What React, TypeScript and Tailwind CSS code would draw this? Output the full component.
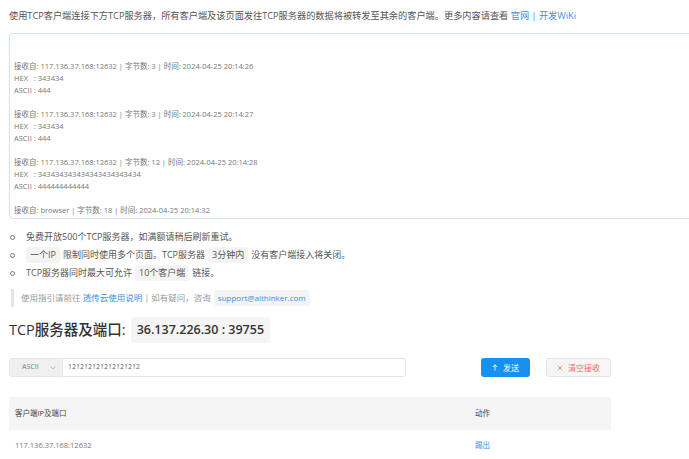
import React from 'react';

const logs = [
  '',
  '',
  '接收自: 117.136.37.168:12632 | 字节数: 3 | 时间: 2024-04-25 20:14:26',
  'HEX   : 343434',
  'ASCII : 444',
  '',
  '接收自: 117.136.37.168:12632 | 字节数: 3 | 时间: 2024-04-25 20:14:27',
  'HEX   : 343434',
  'ASCII : 444',
  '',
  '接收自: 117.136.37.168:12632 | 字节数: 12 | 时间: 2024-04-25 20:14:28',
  'HEX   : 343434343434343434343434',
  'ASCII : 444444444444',
  '',
  '接收自: browser | 字节数: 18 | 时间: 2024-04-25 20:14:32',
];

const Code: React.FC<{ children: React.ReactNode; className?: string }> = ({ children, className = '' }) => (
  <span className={`inline-block bg-[#f4f4f4] rounded-[3px] px-[4px] leading-[16px] mx-[3px] ${className}`}>{children}</span>
);

const App: React.FC = () => {
  return (
    <div
      className="w-[689px] h-[459px] overflow-hidden bg-white text-[#555] pl-[9px]"
      style={{ fontFamily: '"Open Sans", "Noto Sans CJK SC", sans-serif' }}
    >
      {/* intro */}
      <p className="pt-[9px] text-[9.2px] leading-[14px] whitespace-nowrap">
        使用TCP客户端连接下方TCP服务器，所有客户端及该页面发往TCP服务器的数据将被转发至其余的客户端。更多内容请查看{' '}
        <span className="text-[#3a8ee6]">官网</span> <span className="text-[#3a8ee6]">|</span>{' '}
        <span className="text-[#3a8ee6]">开发WiKi</span>
      </p>

      {/* receive box */}
      <div className="mt-[10px] w-[720px] h-[186px] border border-[#cfe3f6] rounded-[4px] pt-[2px] px-[4px] overflow-hidden">
        {logs.map((l, i) => (
          <div key={i} className="text-[7.5px] leading-[12px] h-[12px] text-[#777] whitespace-pre">
            {l}
          </div>
        ))}
      </div>

      {/* notes */}
      <ul className="mt-[9px] text-[9px] text-[#555]">
        {[
          <>免费开放500个TCP服务器，如满额请稍后刷新重试。</>,
          <>
            <Code className="ml-0">一个IP</Code>限制同时使用多个页面。TCP服务器<Code>3分钟内</Code>没有客户端接入将关闭。
          </>,
          <>
            TCP服务器同时最大可允许<Code>10个客户端</Code>链接。
          </>,
        ].map((c, i) => (
          <li key={i} className="flex items-center h-[18px]">
            <span className="w-[5px] h-[5px] rounded-full border border-[#777] ml-[1px] mr-[11px]" />
            <span className="whitespace-nowrap">{c}</span>
          </li>
        ))}
      </ul>

      {/* tip */}
      <div className="mt-[7px] ml-[2px] border-l-[3px] border-[#e4e4e4] pl-[7px] h-[18px] flex items-center text-[8.5px] text-[#999] whitespace-nowrap">
        使用指引请前往&nbsp;<span className="text-[#3a8ee6]">透传云使用说明</span>&nbsp;| 如有疑问，咨询
        <Code className="text-[#3a8ee6] text-[8px]">support@aithinker.com</Code>
      </div>

      {/* server */}
      <div className="mt-[10px] flex items-center gap-[5px]">
        <h2 className="text-[14.5px] font-medium text-[#333]">TCP服务器及端口:</h2>
        <span className="bg-[#f5f5f5] rounded-[3px] px-[6px] h-[26px] flex items-center text-[12.5px] font-semibold text-[#333]">
          36.137.226.30 : 39755
        </span>
      </div>

      {/* send row */}
      <div className="mt-[15px] flex items-center h-[19px]">
        <div className="w-[54px] h-full bg-[#f0f0f0] border border-[#e6e6e6] rounded-l-[3px] flex items-center justify-between pl-[12px] pr-[6px] text-[7px] text-[#777]">
          <span>ASCII</span>
          <svg width="6" height="4" viewBox="0 0 6 4" fill="none" stroke="#aaa" strokeWidth="0.8">
            <path d="M0.5 0.5 L3 3 L5.5 0.5" />
          </svg>
        </div>
        <div className="w-[343px] h-full border border-l-0 border-[#e3e3e3] rounded-r-[3px] flex items-center pl-[5px] text-[7px] text-[#666]">
          121212121212121212
        </div>
        <button className="ml-[75px] w-[49px] h-full bg-[#1890f0] rounded-[3px] flex items-center justify-center gap-[5px] text-[8px] text-white">
          <svg width="6" height="7" viewBox="0 0 6 7" fill="none" stroke="white" strokeWidth="0.9">
            <path d="M3 6.5 V0.8 M0.8 3 L3 0.8 L5.2 3" />
          </svg>
          发送
        </button>
        <button className="ml-[16px] w-[65px] h-full bg-[#f6f6f6] border border-[#e4e4e4] rounded-[3px] flex items-center justify-center gap-[5px] text-[8px] text-[#f26b6b]">
          <svg width="6" height="6" viewBox="0 0 6 6" fill="none" stroke="#f26b6b" strokeWidth="0.8">
            <path d="M0.8 0.8 L5.2 5.2 M5.2 0.8 L0.8 5.2" />
          </svg>
          清空接收
        </button>
      </div>

      {/* clients table */}
      <div className="mt-[20px] w-[602px] text-[7.5px]">
        <div className="flex items-center h-[33px] bg-[#f5f5f5] text-[#444]">
          <div className="w-[466px] pl-[6px]">客户端IP及端口</div>
          <div>动作</div>
        </div>
        <div className="flex items-center h-[32px] text-[#777]">
          <div className="w-[466px] pl-[6px]">117.136.37.168:12632</div>
          <div className="text-[#3a8ee6]">踢出</div>
        </div>
      </div>
    </div>
  );
};

export default App;
